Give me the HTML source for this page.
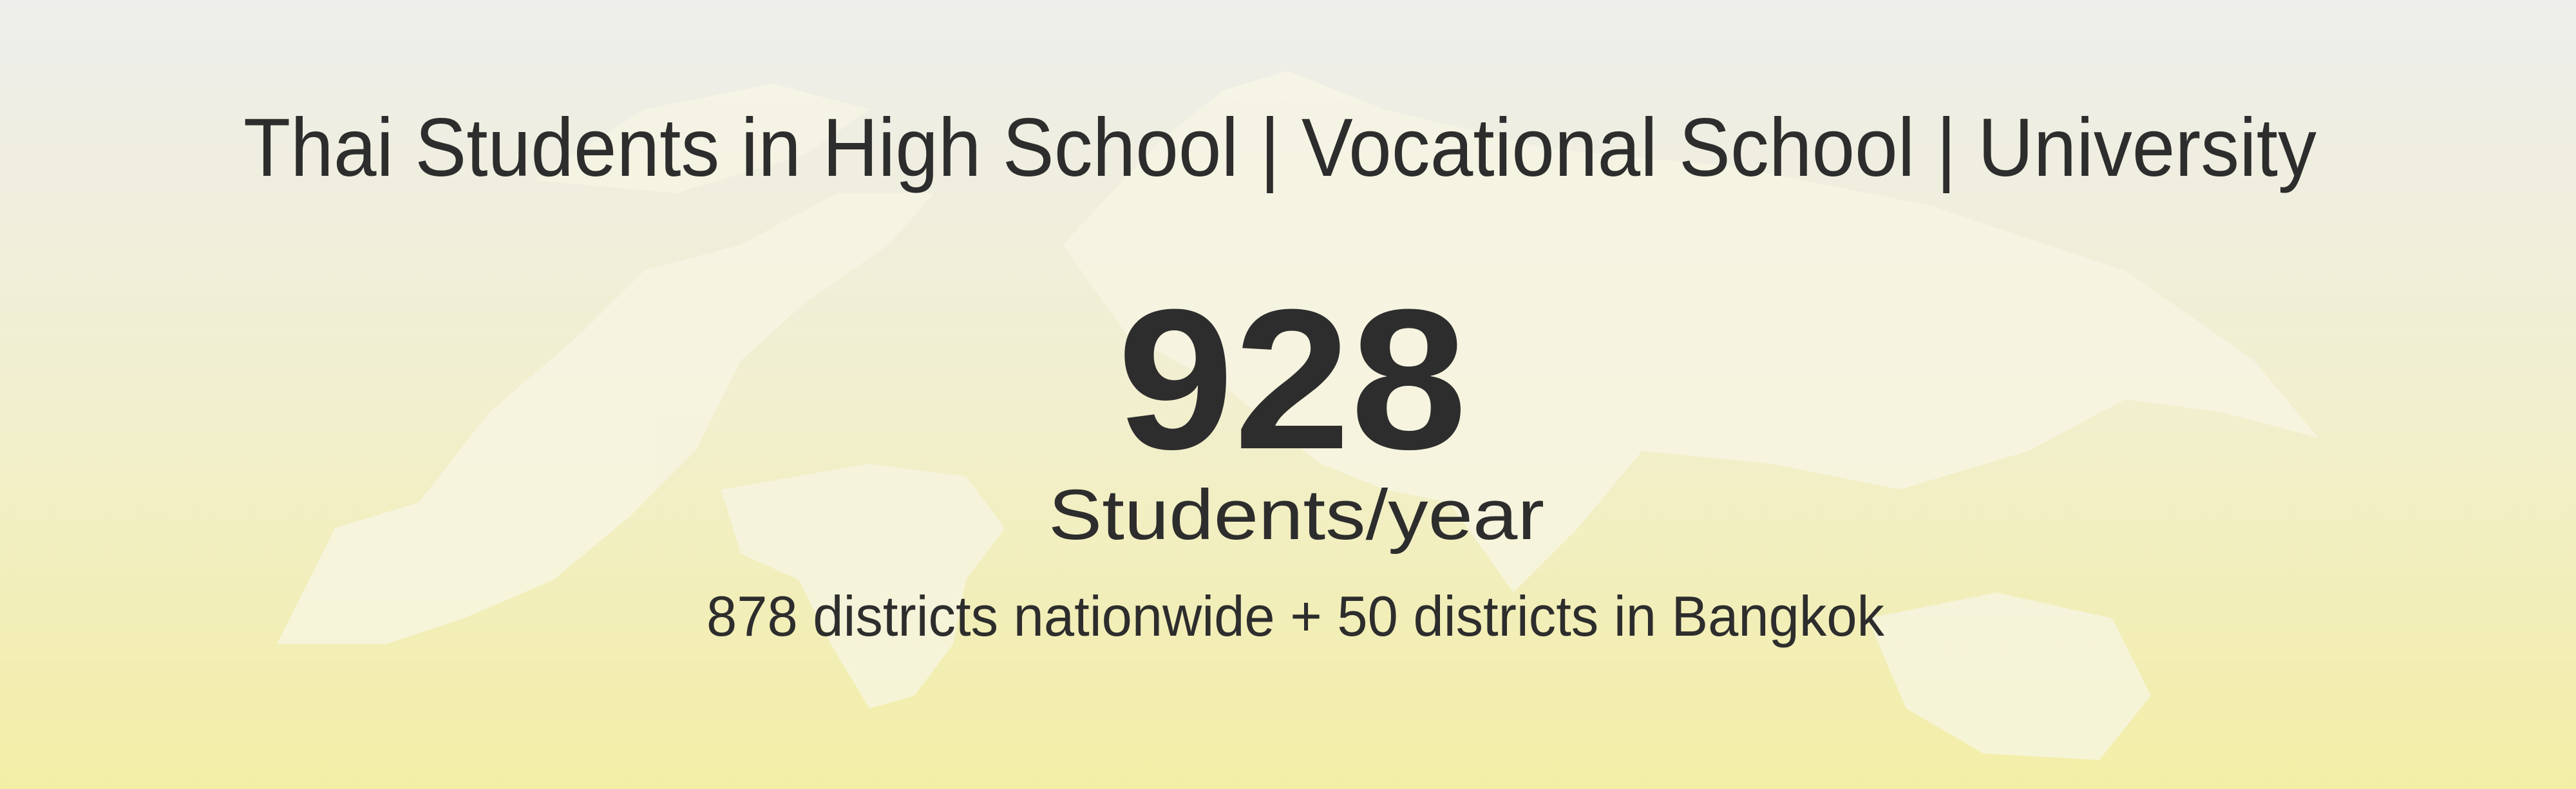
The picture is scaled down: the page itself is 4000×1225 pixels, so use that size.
<!DOCTYPE html>
<html><head><meta charset="utf-8"><style>
html,body{margin:0;padding:0;width:4000px;height:1225px;overflow:hidden}
</style></head><body>
<svg width="4000" height="1225" viewBox="0 0 4000 1225" xmlns="http://www.w3.org/2000/svg">
<defs><linearGradient id="g" x1="0" y1="0" x2="0" y2="1">
<stop offset="0" stop-color="#eeeeec"/><stop offset="0.5" stop-color="#f1efcf"/><stop offset="1" stop-color="#f3eea6"/></linearGradient></defs>
<rect width="4000" height="1225" fill="url(#g)"/>
<g fill="#f7f5e4" opacity="0.75">
<path d="M430 1000 L520 820 L650 780 L760 640 L900 520 L1000 420 L1150 380 L1300 300 L1450 300 L1380 380 L1250 470 L1150 560 L1080 700 L980 800 L860 900 L720 960 L600 1000 Z"/>
<path d="M1120 760 L1350 720 L1500 740 L1560 820 L1500 900 L1480 1000 L1420 1080 L1350 1100 L1290 1000 L1240 900 L1150 860 Z"/>
<path d="M1650 380 L1800 220 L1900 140 L2000 110 L2150 170 L2400 230 L2700 260 L3000 320 L3300 420 L3500 560 L3600 680 L3450 640 L3300 620 L3150 700 L2950 760 L2750 720 L2550 700 L2450 820 L2350 920 L2250 780 L2150 760 L2050 720 L1900 600 L1750 520 Z"/>
<path d="M2900 960 L3100 920 L3280 960 L3340 1080 L3260 1180 L3080 1170 L2960 1100 Z"/>
<path d="M830 280 L1000 170 L1200 130 L1350 170 L1250 240 L1050 300 Z"/>
</g>
<g font-family="Liberation Sans, sans-serif" fill="#2d2d2d">
<text x="378" y="273" font-size="128" textLength="3219" lengthAdjust="spacingAndGlyphs">Thai Students in High School | Vocational School | University</text>
<text x="1735" y="696" font-size="310" font-weight="bold" textLength="543" lengthAdjust="spacingAndGlyphs">928</text>
<text x="1628" y="837" font-size="110" textLength="770" lengthAdjust="spacingAndGlyphs">Students/year</text>
<text x="1097" y="987" font-size="88" textLength="1829" lengthAdjust="spacingAndGlyphs">878 districts nationwide + 50 districts in Bangkok</text>
</g>
</svg>
</body></html>
